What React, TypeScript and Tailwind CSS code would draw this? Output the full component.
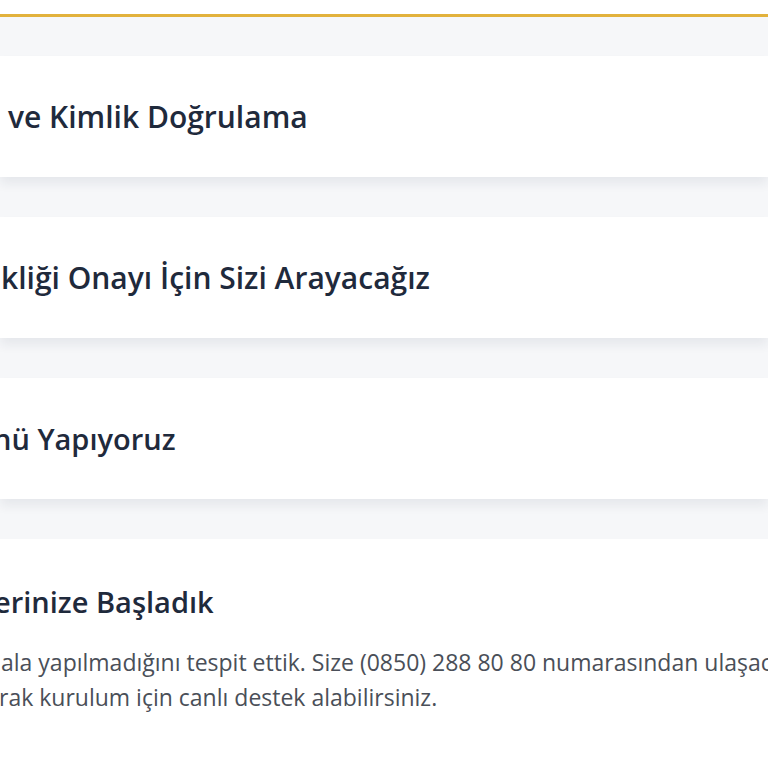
import React from "react";

const titleCls =
  "whitespace-nowrap font-semibold leading-none text-[#1f2a3c]";

function Card({ children }: { children: React.ReactNode }) {
  return (
    <div className="flex h-[121px] items-center bg-white shadow-[0_7px_10px_rgba(30,45,70,0.07)]">
      {children}
    </div>
  );
}

export default function App() {
  return (
    <div
      className="h-[768px] w-[768px] overflow-hidden bg-[#f6f7f9]"
      style={{ fontFamily: '"Open Sans", "Noto Sans", sans-serif' }}
    >
      <div className="h-[14px] bg-white" />
      <div className="h-[3px] bg-[#e2b23c]" />
      <div className="flex flex-col gap-[40px] pt-[39px]">
        <Card>
          <div className={titleCls + " text-[30px] pl-[8px]"}>ve Kimlik Doğrulama</div>
        </Card>
        <Card>
          <div className={titleCls + " text-[30px] pl-[1px]"}>
            kliği Onayı İçin Sizi Arayacağız
          </div>
        </Card>
        <Card>
          <div className={titleCls + " text-[29px] -ml-[7px]"}>nü Yapıyoruz</div>
        </Card>
        <div className="h-[240px] bg-white pt-[48px]">
          <div className={titleCls + " text-[29px] -ml-[6px]"}>erinize Başladık</div>
          <div className="mt-[29px] whitespace-nowrap text-[23px] leading-[35px] text-[#4a4f58]">
            <div className="pl-[1px]">
              ala yapılmadığını tespit ettik. Size (0850) 288 80 80 numarasından
              ulaşacağız.
            </div>
            <div className="-ml-[1px]">
              rak kurulum için canlı destek alabilirsiniz.
            </div>
          </div>
        </div>
      </div>
    </div>
  );
}
